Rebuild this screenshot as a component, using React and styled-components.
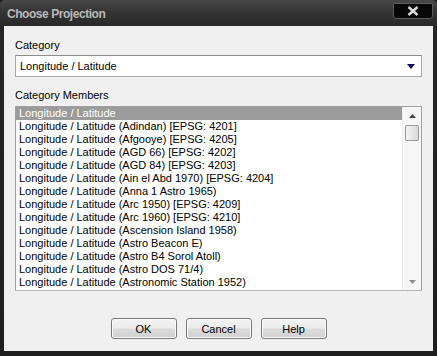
import React from "react";
import styled, { createGlobalStyle } from "styled-components";

const Global = createGlobalStyle`
  html, body { margin: 0; padding: 0; background: #1b1b1b; }
  body { font-family: "Liberation Sans", Arial, sans-serif; }
`;

const Window = styled.div`
  width: 437px;
  height: 356px;
  box-sizing: border-box;
  display: flex;
  flex-direction: column;
  background: linear-gradient(#3c3c3c 0px, #262626 26px, #1e1e1e 100%);
  border-radius: 5px 5px 0 0;
  overflow: hidden;
`;

const TitleBar = styled.div`
  height: 26px;
  flex: none;
  display: flex;
  align-items: center;
  justify-content: space-between;
  padding: 0 4px 0 7px;
  background: linear-gradient(#474747 0%, #353535 45%, #282828 100%);
`;

const Title = styled.div`
  color: #b9b9b9;
  font-weight: bold;
  font-size: 12px;
  letter-spacing: -0.45px;
  margin-top: 1px;
`;

const CloseButton = styled.div`
  width: 40px;
  height: 16px;
  margin-top: -5px;
  box-sizing: border-box;
  border: 1px solid #5c5c5c;
  border-radius: 0 0 3px 3px;
  background: #070707;
  display: flex;
  align-items: center;
  justify-content: center;
`;

const Client = styled.div`
  flex: 1;
  margin: 0 4px 5px 4px;
  background: #f0f0f0;
  padding: 13px 11px 12px 11px;
  display: flex;
  flex-direction: column;
  font-size: 11px;
  color: #000;
`;

const Label = styled.div`
  height: 13px;
  line-height: 13px;
  margin-bottom: ${(p) => p.$gap}px;
`;

const Combo = styled.div`
  height: 22px;
  box-sizing: border-box;
  border: 1px solid #a8a8a8;
  border-top-color: #8c8c8c;
  background: #fff;
  display: flex;
  align-items: center;
  justify-content: space-between;
  padding: 0 6px 0 4px;
  margin-bottom: 12px;
  font-size: 11px;
`;

const ListBox = styled.div`
  height: 185px;
  box-sizing: border-box;
  border: 1px solid #a0a0a0;
  border-bottom-color: #b8b8b8;
  background: #fff;
  display: flex;
`;

const Items = styled.div`
  flex: 1;
  overflow: hidden;
  display: flex;
  flex-direction: column;
`;

const Item = styled.div`
  height: 13px;
  line-height: 13px;
  padding-left: 3px;
  white-space: nowrap;
  background: ${(p) => (p.$selected ? "#9b9b9b" : "transparent")};
  color: ${(p) => (p.$selected ? "#fff" : "#000")};
`;

const ScrollBar = styled.div`
  width: 18px;
  flex: none;
  background: #f6f6f6;
  border-left: 1px solid #ececec;
  display: flex;
  flex-direction: column;
  align-items: center;
`;

const ArrowBox = styled.div`
  height: 17px;
  width: 100%;
  display: flex;
  align-items: center;
  justify-content: center;
`;

const Thumb = styled.div`
  width: 14px;
  height: 16px;
  margin-top: 1px;
  box-sizing: border-box;
  border: 1px solid #9a9a9a;
  border-radius: 2px;
  background: linear-gradient(90deg, #f4f4f4, #e6e6e6 50%, #d8d8d8);
`;

const Spacer = styled.div`
  flex: 1;
`;

const ButtonRow = styled.div`
  margin-top: auto;
  display: flex;
  justify-content: center;
  gap: 9px;
`;

const Button = styled.div`
  width: 66px;
  height: 21px;
  box-sizing: border-box;
  border: 1px solid #7a7a7a;
  border-radius: 3px;
  background: linear-gradient(#f3f3f3 0%, #ececec 48%, #dcdcdc 52%, #d0d0d0 100%);
  box-shadow: inset 0 0 0 1px #fbfbfb;
  display: flex;
  align-items: center;
  justify-content: center;
  font-size: 11px;
  color: #000;
`;

const items = [
  "Longitude / Latitude",
  "Longitude / Latitude (Adindan) [EPSG: 4201]",
  "Longitude / Latitude (Afgooye) [EPSG: 4205]",
  "Longitude / Latitude (AGD 66) [EPSG: 4202]",
  "Longitude / Latitude (AGD 84) [EPSG: 4203]",
  "Longitude / Latitude (Ain el Abd 1970) [EPSG: 4204]",
  "Longitude / Latitude (Anna 1 Astro 1965)",
  "Longitude / Latitude (Arc 1950) [EPSG: 4209]",
  "Longitude / Latitude (Arc 1960) [EPSG: 4210]",
  "Longitude / Latitude (Ascension Island 1958)",
  "Longitude / Latitude (Astro Beacon E)",
  "Longitude / Latitude (Astro B4 Sorol Atoll)",
  "Longitude / Latitude (Astro DOS 71/4)",
  "Longitude / Latitude (Astronomic Station 1952)",
];

export default function App() {
  return (
    <>
      <Global />
      <Window>
        <TitleBar>
          <Title>Choose Projection</Title>
          <CloseButton>
            <svg width="12" height="10" viewBox="0 0 12 10">
              <path d="M1.5 1 L10.5 9 M10.5 1 L1.5 9" stroke="#dcdcdc" strokeWidth="2.4" />
            </svg>
          </CloseButton>
        </TitleBar>
        <Client>
          <Label $gap={3}>Category</Label>
          <Combo>
            <span>Longitude / Latitude</span>
            <svg width="8" height="5" viewBox="0 0 8 5">
              <path d="M0 0 H8 L4 5 Z" fill="#0a0a50" />
            </svg>
          </Combo>
          <Label $gap={4}>Category Members</Label>
          <ListBox>
            <Items>
              {items.map((t, i) => (
                <Item key={i} $selected={i === 0}>{t}</Item>
              ))}
            </Items>
            <ScrollBar>
              <ArrowBox>
                <svg width="7" height="4" viewBox="0 0 7 4">
                  <path d="M0 4 L3.5 0 L7 4 Z" fill="#4a4a4a" />
                </svg>
              </ArrowBox>
              <Thumb />
              <Spacer />
              <ArrowBox>
                <svg width="7" height="4" viewBox="0 0 7 4">
                  <path d="M0 0 L7 0 L3.5 4 Z" fill="#8a8a8a" />
                </svg>
              </ArrowBox>
            </ScrollBar>
          </ListBox>
          <ButtonRow>
            <Button>OK</Button>
            <Button>Cancel</Button>
            <Button>Help</Button>
          </ButtonRow>
        </Client>
      </Window>
    </>
  );
}
